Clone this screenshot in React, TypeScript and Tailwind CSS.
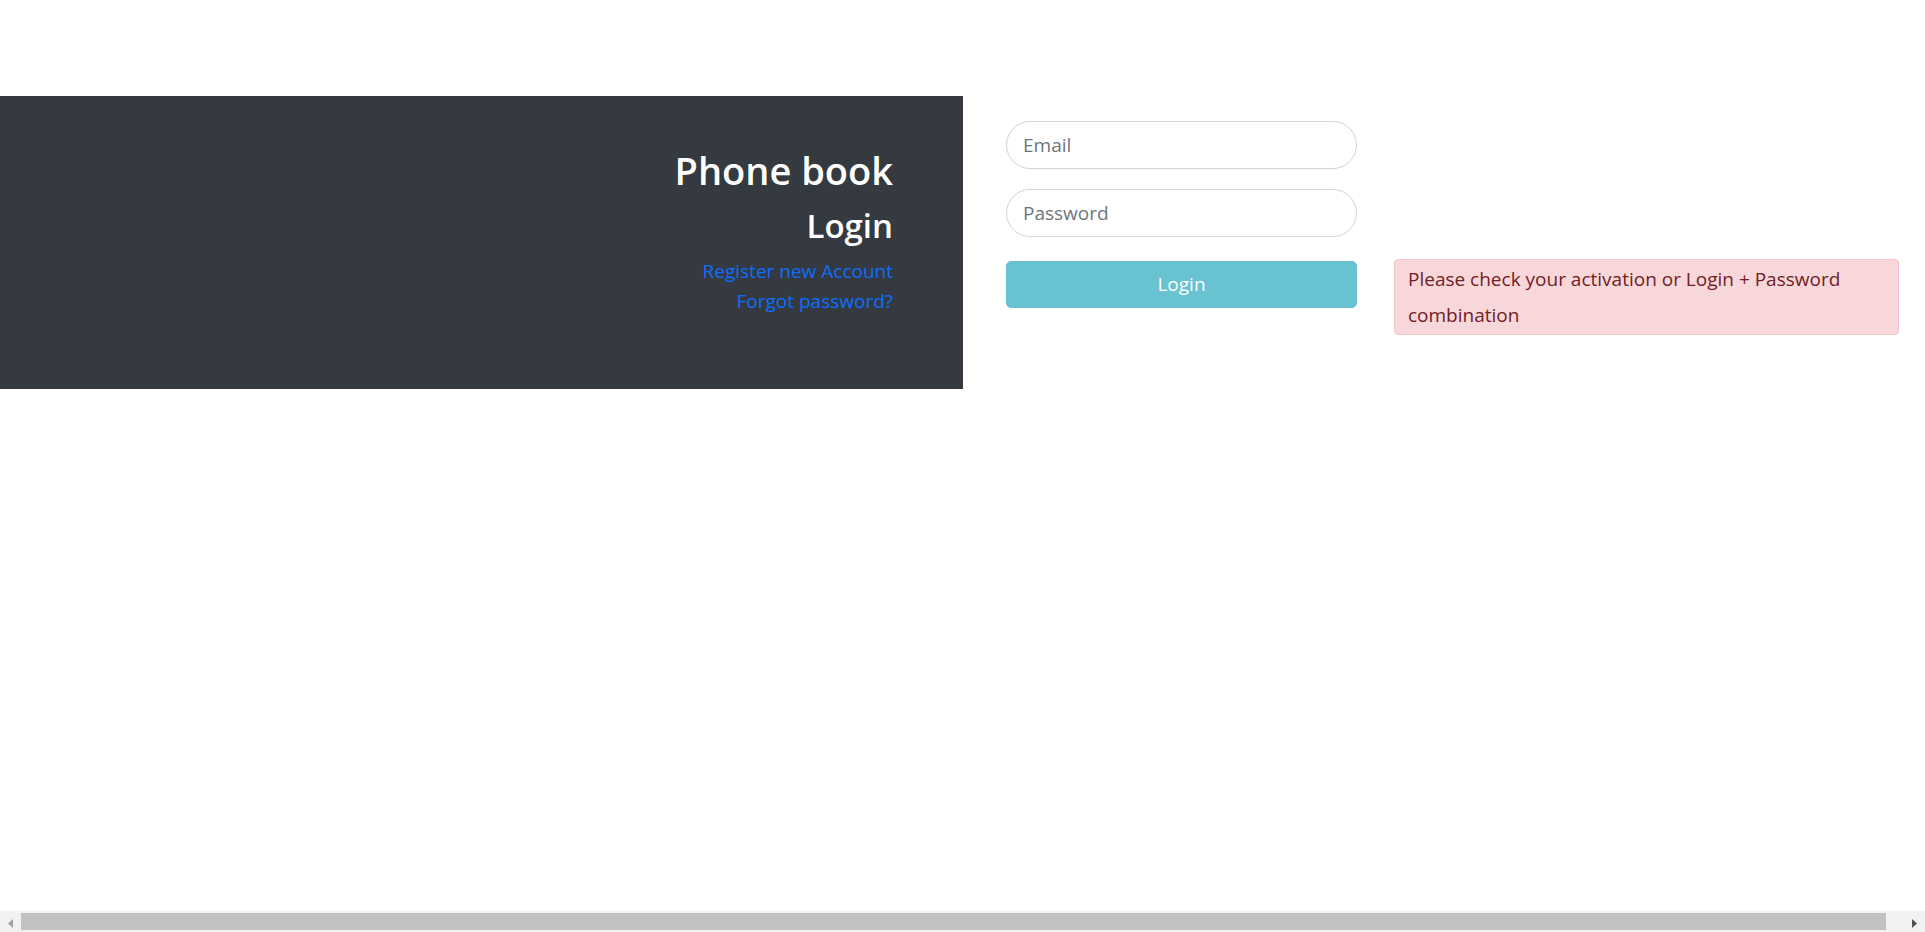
import React from "react";

export default function App() {
  return (
    <div
      className="relative min-h-screen w-full bg-white"
      style={{ fontFamily: '"Open Sans", "Noto Sans", sans-serif' }}
    >
      <div className="flex items-start pt-[96px]">
        <div className="flex h-[293px] w-[963px] shrink-0 flex-col items-end bg-[#343a40] pr-[70px] pt-[50px] text-right">
          <h1 className="text-[38px] font-semibold leading-[48px] text-white">Phone book</h1>
          <h2 className="mt-[12px] text-[33px] font-semibold leading-[40px] text-white">Login</h2>
          <a href="#" className="mt-[10px] text-[19px] leading-[30px] text-[#0d6efd]">
            Register new Account
          </a>
          <a href="#" className="text-[19px] leading-[30px] text-[#0d6efd]">
            Forgot password?
          </a>
        </div>

        <div className="ml-[43px] flex w-[351px] shrink-0 flex-col pt-[25px]">
          <input
            type="email"
            placeholder="Email"
            className="h-[48px] w-full rounded-full border border-[#ced4da] bg-white px-4 text-[19px] text-[#495057] outline-none placeholder:text-[#6c757d]"
          />
          <input
            type="password"
            placeholder="Password"
            className="mt-[20px] h-[48px] w-full rounded-full border border-[#ced4da] bg-white px-4 text-[19px] text-[#495057] outline-none placeholder:text-[#6c757d]"
          />
          <button
            type="button"
            className="mt-[24px] h-[47px] w-full rounded-[5px] border border-[#68c2d1] bg-[#68c2d1] text-[19px] text-white"
          >
            Login
          </button>
        </div>

        <div className="ml-[37px] mt-[163px] w-[505px] shrink-0 rounded-[4px] border border-[#f5c6cb] bg-[#f8d7da] px-[13px] py-[1px] text-[19px] leading-[36px] text-[#721c24]">
          Please check your activation or Login + Password
          <br />
          combination
        </div>
      </div>

      <div className="fixed bottom-0 left-0 right-0 h-[21px] bg-[#f1f1f1]">
        <div className="absolute left-[21px] right-[39px] top-[2px] h-[17px] bg-[#c1c1c1]" />
        <svg className="absolute left-[8px] top-[8px]" width="5" height="9" viewBox="0 0 5 9">
          <path d="M5 0 L0 4.5 L5 9 Z" fill="#a3a3a3" />
        </svg>
        <svg className="absolute right-[8px] top-[8px]" width="5" height="9" viewBox="0 0 5 9">
          <path d="M0 0 L5 4.5 L0 9 Z" fill="#505050" />
        </svg>
      </div>
    </div>
  );
}
